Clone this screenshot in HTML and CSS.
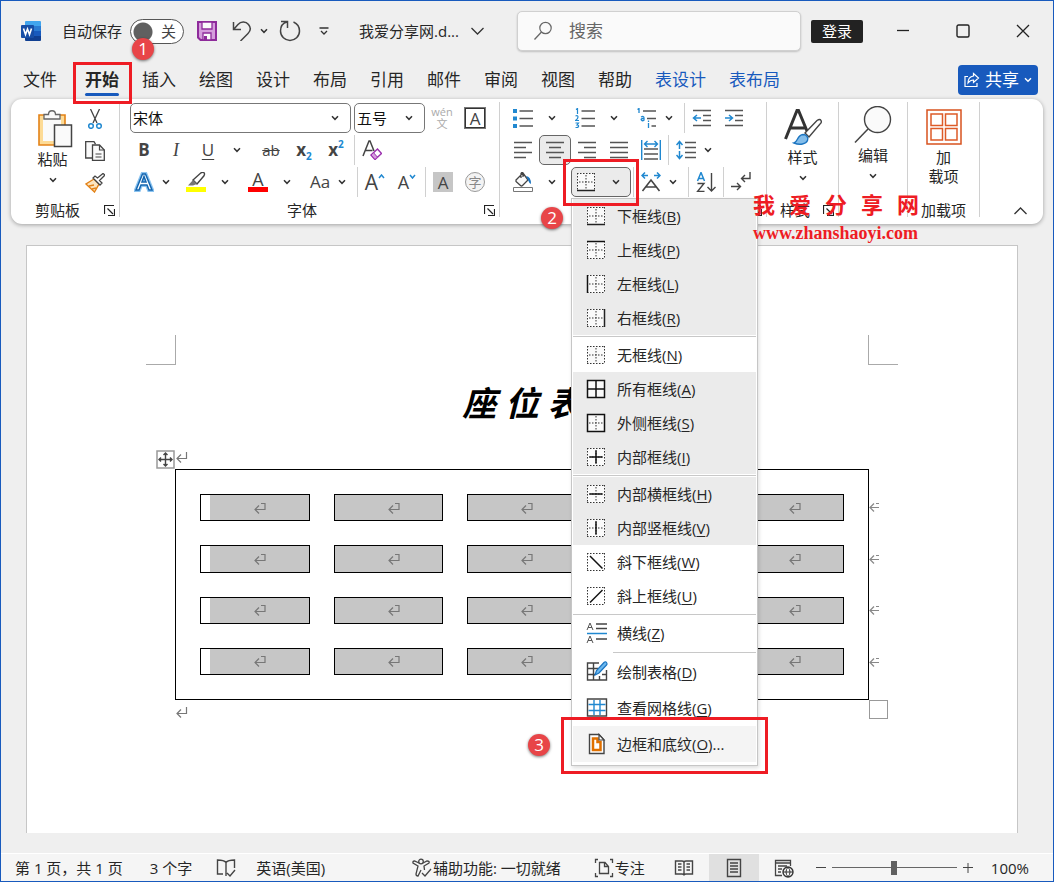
FILE: index.html
```html
<!DOCTYPE html>
<html lang="zh-CN">
<head>
<meta charset="utf-8">
<title>我爱分享网 - Word</title>
<link rel="stylesheet" href="styles.css">
</head>
<body>
<svg class="defs" aria-hidden="true">
  <symbol id="chev" viewBox="0 0 8 6"><path d="M1 1.200 4 4.300 7 1.200" fill="none" stroke="#333" stroke-width="1.500"/></symbol>
  <symbol id="launch" viewBox="0 0 11 11"><path d="M.5 9V.5H10M3.500 3.500l5.500 5.500M10.500 4v6.500H4" fill="none" stroke="#222" stroke-width="1.200"/></symbol>
  <symbol id="dots" viewBox="0 0 20 20"><path fill="#fafafa" d="M1 1h18v18H1z"/><path d="M1 1.500h18M1 18.500h18M1.500 1v18M18.500 1v18M10 3v14M3 10h14" fill="none" stroke="#333" stroke-dasharray="1.500 1.500"/></symbol>
  <symbol id="mark" viewBox="0 0 12 12"><path d="M10.500 1v6.500H1.500M5 3.500l-4 4 4 4" fill="none" stroke="#777" stroke-width="1.200"/></symbol>
  <symbol id="cellmark" viewBox="0 0 12 12"><path d="M7 1.500h4v6H1.500M5 3.500l-4 4 4 4" fill="none" stroke="#777" stroke-width="1.200"/></symbol>
  <symbol id="rowmark" viewBox="0 0 12 12"><path d="M7 2.500h3M1 6.500h9M5 2.500l-4 4 4 4" fill="none" stroke="#888" stroke-width="1.200"/></symbol>
</svg>

<header class="titlebar">
  <svg class="i20 logo" viewBox="0 0 20 20"><path fill="#41a5ee" d="M5 0h14q1 0 1 1v4H4V1q0-1 1-1z"/><path fill="#2b7cd3" d="M4 5h16v5H4z"/><path fill="#185abd" d="M4 10h16v5H4z"/><path fill="#103f91" d="M4 15h16v4q0 1-1 1H5q-1 0-1-1z"/><rect y="4" width="13" height="13" rx="1" fill="#174ea6"/><path d="m2.500 7.500 2 6 2-5.500 2 5.500 2-6" fill="none" stroke="#fff" stroke-width="1.600"/></svg>
  <label class="autosave" for="autosave">自动保存</label>
  <span class="switch"><input type="checkbox" id="autosave" role="switch"><span>关</span><span class="badge badge-1">1</span></span>
  <button class="plain save" aria-label="保存"><svg class="i20" viewBox="0 0 20 20"><path fill="#d59ddc" stroke="#8e2b9b" stroke-width="2" d="M1 1h18v18H3.500L1 16.500z"/><path fill="#fafafa" stroke="#8e2b9b" stroke-width="1.300" d="M5 1h10v7H5zM6 12h8v7H6z"/><path fill="#8e2b9b" d="M7 15h3v4H7z"/></svg></button>
  <button class="plain undo" aria-label="撤消"><svg class="i20" viewBox="0 0 20 20"><path d="M1.500 1v7.500H9M2 8l4-4.500C9 0 14 .500 16.500 3.500c2.500 3 2 6.500-.500 9L8.500 20" fill="none" stroke="#444" stroke-width="1.500"/></svg></button>
  <button class="plain" aria-label="撤消选项"><svg class="chev"><use href="#chev"/></svg></button>
  <button class="plain redo" aria-label="重复"><svg class="i22" viewBox="0 0 22 22"><path d="M2 1.500h6.500V8M8 2C4 3 1.500 6.500 1.500 11c0 5.500 4.500 9.500 9.500 9.500s9.500-4 9.500-9.500c0-4.500-2.500-7.500-6-9" fill="none" stroke="#444" stroke-width="1.500"/></svg></button>
  <button class="plain qat" aria-label="自定义快速访问工具栏"><svg width="10" height="9" viewBox="0 0 10 9"><path d="M.5 1h9M2 4l3 3 3-3" fill="none" stroke="#333" stroke-width="1.300"/></svg></button>
  <button class="plain filename">我爱分享网.d...<svg width="13" height="8" viewBox="0 0 13 8"><path d="m.5 1 6 6 6-6" fill="none" stroke="#333" stroke-width="1.300"/></svg></button>
  <div class="search"><svg class="i20" viewBox="0 0 20 20"><circle cx="12.500" cy="7" r="5.700" fill="none" stroke="#666" stroke-width="1.200"/><path d="m8.500 11-7 7.500" stroke="#666" stroke-width="1.300"/></svg><input type="text" placeholder="搜索" aria-label="搜索"></div>
  <button class="login">登录</button>
  <div class="window-buttons">
    <button class="plain" aria-label="最小化"><svg class="i14" viewBox="0 0 14 14"><path d="M1 6.500h12" stroke="#222" stroke-width="1.300"/></svg></button>
    <button class="plain" aria-label="最大化"><svg class="i14" viewBox="0 0 14 14"><rect x="1" y="1" width="12" height="12" rx="1.500" fill="none" stroke="#222" stroke-width="1.400"/></svg></button>
    <button class="plain" aria-label="关闭"><svg class="i14" viewBox="0 0 14 14"><path d="m1 1 12 12M13 1 1 13" stroke="#222" stroke-width="1.300"/></svg></button>
  </div>
</header>

<nav class="tabs">
  <button class="tab">文件</button>
  <button class="tab active">开始<span class="frame frame-tab"></span></button>
  <button class="tab">插入</button>
  <button class="tab">绘图</button>
  <button class="tab">设计</button>
  <button class="tab">布局</button>
  <button class="tab">引用</button>
  <button class="tab">邮件</button>
  <button class="tab">审阅</button>
  <button class="tab">视图</button>
  <button class="tab">帮助</button>
  <button class="tab context">表设计</button>
  <button class="tab context">表布局</button>
  <button class="share"><svg class="i16" viewBox="0 0 16 16"><path d="M4 4.500H1v10h12V11M9.500 1.500l5 4.500-5 4.500V8C7 8 5.500 9 4 11c0-4 2-6.500 5.500-7z" fill="none" stroke="#fff" stroke-width="1.200"/></svg>共享<svg class="chev" viewBox="0 0 8 6"><path d="M1 1.200 4 4.300 7 1.200" fill="none" stroke="#fff" stroke-width="1.400"/></svg></button>
</nav>

<main class="ribbon">
  <section class="group clipboard">
    <div class="group-body columns">
      <button class="big paste"><svg width="36" height="40" viewBox="0 0 36 40"><path fill="#fddb96" stroke="#e38217" stroke-width="1.600" d="M2 7h26v30H2z"/><path fill="#fafafa" d="M6 11h18v22H6z"/><path fill="#fafafa" stroke="#666" stroke-width="1.300" d="M7 11V6.500h4.500c0-5 7-5 7 0H23V11z"/><path fill="#fafafa" stroke="#444" stroke-width="1.500" d="M17.500 17h17v21.500h-17z"/></svg><span>粘贴</span><svg class="chev"><use href="#chev"/></svg></button>
      <div class="stack">
        <button class="tool" aria-label="剪切"><svg class="i20" viewBox="0 0 20 20"><path d="M5.500 0 12 14M14.500 0 8 14" stroke="#444" stroke-width="1.300"/><circle cx="6" cy="17" r="2.300" fill="none" stroke="#2088d0" stroke-width="1.500"/><circle cx="14" cy="17" r="2.300" fill="none" stroke="#2088d0" stroke-width="1.500"/></svg></button>
        <button class="tool" aria-label="复制"><svg class="i20" viewBox="0 0 20 20"><path d="M7 17H.7V.7H9l1.500 2.500" fill="#fafafa" stroke="#444" stroke-width="1.300"/><path d="M7.500 4h7l4.800 5v10.300H7.500z" fill="#fafafa" stroke="#444" stroke-width="1.300"/><path d="M14.500 4v5h5M10.500 13h6M10.500 16h6" fill="none" stroke="#444" stroke-width="1.200"/></svg></button>
        <button class="tool" aria-label="格式刷"><svg class="i20" viewBox="0 0 20 20"><path d="m9 6-8 5 8.500 8L14 11z" fill="#fce5c0" stroke="#e38217" stroke-width="1.400"/><path d="m4 13 5-1M7 16l4-1" stroke="#e38217" stroke-width="1.300"/><path d="m8 5 7 7 2-2-2.500-2.500L20 2l-2-1.500L12.500 5 10 3z" fill="#fff" stroke="#444" stroke-width="1.300"/></svg></button>
      </div>
    </div>
    <footer><span>剪贴板</span><button class="plain" aria-label="剪贴板选项"><svg class="launch"><use href="#launch"/></svg></button></footer>
  </section>

  <section class="group font">
    <div class="group-body">
      <div class="row fields">
        <span class="combo family"><select aria-label="字体"><option>宋体</option></select><svg class="chev"><use href="#chev"/></svg></span>
        <span class="combo size"><select aria-label="字号"><option>五号</option></select><svg class="chev"><use href="#chev"/></svg></span>
        <button class="tool phonetic" aria-label="拼音指南"><span>wén</span><span>文</span></button>
        <button class="tool"><span class="boxed">A</span></button>
      </div>
      <div class="row">
        <button class="tool bold">B</button>
        <button class="tool italic">I</button>
        <button class="tool underline">U</button>
        <button class="drop wide" aria-label="下划线选项"><svg class="chev"><use href="#chev"/></svg></button>
        <button class="tool strike">ab</button>
        <button class="tool script"><b>x</b><sub>2</sub></button>
        <button class="tool script"><b>x</b><sup>2</sup></button>
        <span class="sep"></span>
        <button class="tool" aria-label="清除格式"><svg class="i20" viewBox="0 0 20 20"><path d="M1 16 7 1h1l4 10M3.500 10.500h7" fill="none" stroke="#444" stroke-width="1.500"/><path d="m9 15 6.500-6 4 4.500-6.500 6z" fill="#fff" stroke="#9b2fae" stroke-width="1.400"/><path d="m9 15 2.500-2.300 4 4.500-2.500 2.300z" fill="#d59ddc" stroke="#9b2fae"/></svg></button>
      </div>
      <div class="row">
        <button class="tool" aria-label="文本效果"><svg class="i20" viewBox="0 0 20 20"><path d="M2 18 8.500 2h3L18 18h-3l-2-5H7l-2 5zM8 10h4l-2-5.500z" fill="#fff" stroke="#8cc4f0" stroke-width="4"/><path d="M2 18 8.500 2h3L18 18h-3l-2-5H7l-2 5zM8 10h4l-2-5.500z" fill="#fff" stroke="#1466b0" stroke-width="1.500"/></svg></button>
        <button class="drop" aria-label="文本效果选项"><svg class="chev"><use href="#chev"/></svg></button>
        <button class="tool" aria-label="突出显示"><svg class="i20" viewBox="0 0 20 20"><path d="M7 8 15 .8q2-1 3 0t0 3L11 12z" fill="#fff" stroke="#444" stroke-width="1.400"/><path d="m7 8 4 4-4 1.500H2z" fill="#777"/><path fill="#ff0" d="M0 15h20v5H0z"/></svg></button>
        <button class="drop wide" aria-label="突出显示颜色"><svg class="chev"><use href="#chev"/></svg></button>
        <button class="tool color" aria-label="字体颜色"><span>A</span></button>
        <button class="drop wide" aria-label="字体颜色选项"><svg class="chev"><use href="#chev"/></svg></button>
        <button class="tool case">Aa</button>
        <button class="drop" aria-label="更改大小写"><svg class="chev"><use href="#chev"/></svg></button>
        <span class="sep"></span>
        <button class="tool grow">A<svg class="caret" viewBox="0 0 7 5"><path d="m1 4 2.500-3L6 4" fill="none" stroke="#2088d0" stroke-width="1.500"/></svg></button>
        <button class="tool shrink">A<svg class="caret" viewBox="0 0 7 5"><path d="m1 1 2.500 3L6 1" fill="none" stroke="#2088d0" stroke-width="1.500"/></svg></button>
        <span class="sep"></span>
        <button class="tool"><span class="shaded">A</span></button>
        <button class="tool"><span class="circled">字</span></button>
      </div>
    </div>
    <footer><span>字体</span><button class="plain" aria-label="字体选项"><svg class="launch"><use href="#launch"/></svg></button></footer>
  </section>

  <section class="group paragraph">
    <div class="group-body">
      <div class="row">
        <button class="tool" aria-label="项目符号"><svg class="i20" viewBox="0 0 20 20"><path fill="#2088d0" d="M0 1h4v4H0zM0 8.500h4v4H0zM0 16h4v4H0z"/><path d="M6.500 3H20M6.500 10.500H20M6.500 18H20" stroke="#555" stroke-width="1.300"/></svg></button>
        <button class="drop wide" aria-label="项目符号库"><svg class="chev"><use href="#chev"/></svg></button>
        <button class="tool" aria-label="编号"><svg class="i20" viewBox="0 0 20 20"><path d="M1 1.500 2.500.500V6M.500 8q2.500-1 2.500 1t-2.500 3.500H4M.500 15H3.500L2 17q2 0 1.500 1.500T.500 19.500" fill="none" stroke="#2088d0" stroke-width="1.200"/><path d="M6.500 3H20M6.500 10.500H20M6.500 18H20" stroke="#555" stroke-width="1.300"/></svg></button>
        <button class="drop wide" aria-label="编号库"><svg class="chev"><use href="#chev"/></svg></button>
        <button class="tool" aria-label="多级列表"><svg class="i20" viewBox="0 0 20 20"><path d="M.500 1.500 2 .500V5M4 9q3-1.500 3 1v2.500M7 10.500H5.500q-2 .500-1 1.700t2.500 0M11.500 15v5M11.500 12.500V14" fill="none" stroke="#2088d0" stroke-width="1.300"/><path d="M6 3h13M10 10.500h9M14.500 18H19" stroke="#555" stroke-width="1.300"/></svg></button>
        <button class="drop" aria-label="列表库"><svg class="chev"><use href="#chev"/></svg></button>
        <span class="sep"></span>
        <button class="tool" aria-label="减少缩进量"><svg class="i20" viewBox="0 0 20 20"><path d="M1 2.500h18M11 7.500h8M11 12.500h8M1 17.500h18" stroke="#555" stroke-width="1.300"/><path d="M9 10H2m3-3-3.500 3L5 13" fill="none" stroke="#2088d0" stroke-width="1.500"/></svg></button>
        <button class="tool" aria-label="增加缩进量"><svg class="i20" viewBox="0 0 20 20"><path d="M1 2.500h18M11 7.500h8M11 12.500h8M1 17.500h18" stroke="#555" stroke-width="1.300"/><path d="M1 10h7M5 7l3.500 3L5 13" fill="none" stroke="#2088d0" stroke-width="1.500"/></svg></button>
      </div>
      <div class="row">
        <button class="tool" aria-label="左对齐"><svg class="i20" viewBox="0 0 20 20"><path d="M1 2.500h18M1 7.500h12M1 12.500h18M1 17.500h12" stroke="#555" stroke-width="1.400"/></svg></button>
        <button class="tool pressed" aria-label="居中"><svg class="i20" viewBox="0 0 20 20"><path d="M1 2.500h18M4 7.500h12M1 12.500h18M4 17.500h12" stroke="#555" stroke-width="1.400"/></svg></button>
        <button class="tool" aria-label="右对齐"><svg class="i20" viewBox="0 0 20 20"><path d="M1 2.500h18M7 7.500h12M1 12.500h18M7 17.500h12" stroke="#555" stroke-width="1.400"/></svg></button>
        <button class="tool" aria-label="两端对齐"><svg class="i20" viewBox="0 0 20 20"><path d="M1 2.500h18M1 7.500h18M1 12.500h18M1 17.500h18" stroke="#555" stroke-width="1.400"/></svg></button>
        <button class="tool" aria-label="分散对齐"><svg class="i20" viewBox="0 0 20 20"><path d="M3 9h14M3 14h14M3 19h14" stroke="#555" stroke-width="1.400"/><path d="M.7 0v20M19.300 0v20M4 4h12M6.500 1 3.500 4l3 3M13.500 1l3 3-3 3" fill="none" stroke="#2088d0" stroke-width="1.400"/></svg></button>
        <span class="sep"></span>
        <button class="tool" aria-label="行距"><svg class="i20" viewBox="0 0 20 20"><path d="M9 2.500h11M9 7.500h11M9 12.500h11M9 17.500h11" stroke="#555" stroke-width="1.400"/><path d="M3.500 9V2M.500 5l3-3.500 3 3.500M3.500 11v7M.500 15l3 3.500 3-3.500" fill="none" stroke="#2088d0" stroke-width="1.500"/></svg></button>
        <button class="drop" aria-label="行距选项"><svg class="chev"><use href="#chev"/></svg></button>
      </div>
      <div class="row">
        <button class="tool" aria-label="底纹"><svg class="i20" viewBox="0 0 20 20"><path d="m3 8 7-7 5 7-5.500 5.500q-1 1-2 0L3 9.500zM8 6V1.500q1-2 2 0V5" fill="#fafafa" stroke="#444" stroke-width="1.300"/><path d="M13 4q5 .500 5 8-2-1-3-4z" fill="#1b74c0"/><path d="M.500 15.500h19v4H.500z" fill="#fff" stroke="#777"/></svg></button>
        <button class="drop wide" aria-label="底纹颜色"><svg class="chev"><use href="#chev"/></svg></button>
        <div class="borders">
          <button class="borders-button" aria-label="边框" aria-expanded="true"><svg class="i20" viewBox="0 0 20 20"><use href="#dots"/><path d="M1 18.500h18" stroke="#222" stroke-width="1.500"/></svg><svg class="chev"><use href="#chev"/></svg></button>
          <div class="menu" role="menu">
            <button class="item on" role="menuitem"><svg class="i20" viewBox="0 0 20 20"><use href="#dots"/><path d="M1 18.500h18" stroke="#222" stroke-width="1.500"/></svg><span>下框线(<u>B</u>)</span></button>
            <button class="item on" role="menuitem"><svg class="i20" viewBox="0 0 20 20"><use href="#dots"/><path d="M1 1.500h18" stroke="#111" stroke-width="1.500"/></svg><span>上框线(<u>P</u>)</span></button>
            <button class="item on" role="menuitem"><svg class="i20" viewBox="0 0 20 20"><use href="#dots"/><path d="M1.500 1v18" stroke="#111" stroke-width="1.500"/></svg><span>左框线(<u>L</u>)</span></button>
            <button class="item on" role="menuitem"><svg class="i20" viewBox="0 0 20 20"><use href="#dots"/><path d="M18.500 1v18" stroke="#222" stroke-width="1.500"/></svg><span>右框线(<u>R</u>)</span></button>
            <hr>
            <button class="item" role="menuitem"><svg class="i20" viewBox="0 0 20 20"><use href="#dots"/></svg><span>无框线(<u>N</u>)</span></button>
            <button class="item on" role="menuitem"><svg class="i20" viewBox="0 0 20 20"><path d="M1.500 1.500h17v17h-17zM10 1.500v17M1.500 10h17" fill="#fafafa" stroke="#111" stroke-width="1.500"/></svg><span>所有框线(<u>A</u>)</span></button>
            <button class="item on" role="menuitem"><svg class="i20" viewBox="0 0 20 20"><use href="#dots"/><path d="M1.500 1.500h17v17h-17z" fill="none" stroke="#111" stroke-width="1.500"/></svg><span>外侧框线(<u>S</u>)</span></button>
            <button class="item on" role="menuitem"><svg class="i20" viewBox="0 0 20 20"><use href="#dots"/><path d="M10 3.500v13M3.500 10h13" stroke="#111" stroke-width="1.500"/></svg><span>内部框线(<u>I</u>)</span></button>
            <hr>
            <button class="item on" role="menuitem"><svg class="i20" viewBox="0 0 20 20"><use href="#dots"/><path d="M3.500 10h13" stroke="#111" stroke-width="1.500"/></svg><span>内部横框线(<u>H</u>)</span></button>
            <button class="item on" role="menuitem"><svg class="i20" viewBox="0 0 20 20"><use href="#dots"/><path d="M10 3.500v13" stroke="#111" stroke-width="1.500"/></svg><span>内部竖框线(<u>V</u>)</span></button>
            <button class="item" role="menuitem"><svg class="i20" viewBox="0 0 20 20"><path d="M1 1.500h18M1 18.500h18M1.500 1v18M18.500 1v18" fill="none" stroke="#333" stroke-dasharray="1.500 1.500"/><path d="m4 4 12.500 12.500" stroke="#111" stroke-width="1.500"/></svg><span>斜下框线(<u>W</u>)</span></button>
            <button class="item" role="menuitem"><svg class="i20" viewBox="0 0 20 20"><path d="M1 1.500h18M1 18.500h18M1.500 1v18M18.500 1v18" fill="none" stroke="#333" stroke-dasharray="1.500 1.500"/><path d="M4 16.500 16.500 4" stroke="#111" stroke-width="1.500"/></svg><span>斜上框线(<u>U</u>)</span></button>
            <hr>
            <button class="item" role="menuitem"><svg class="i22" viewBox="0 0 22 22"><path d="m1 8 3-7 3 7M2 5.500h4M1 21l3-7 3 7M2 18.500h4" fill="none" stroke="#555"/><path d="M10 2h11M10 6.500h11M10 17h11" stroke="#444" stroke-width="1.400"/><path d="M1 11.500h20" stroke="#2088d0" stroke-width="1.500"/></svg><span>横线(<u>Z</u>)</span></button>
            <hr class="inset">
            <button class="item tall" role="menuitem"><svg class="i22" viewBox="0 0 22 22"><path d="M13 2H1.500v17h19V9M1.500 7.500H12M1.500 13.500H9M7.500 2v17M13.500 15v4M16 13.500h4" fill="none" stroke="#444" stroke-width="1.400"/><path d="M9 14 10.500 9.500 18 1.500q1.500-1.500 2.500 0t0 2.500L13 12z" fill="#6cb8ef" stroke="#1b74c0" stroke-width="1.200"/></svg><span>绘制表格(<u>D</u>)</span></button>
            <button class="item tall" role="menuitem"><svg class="i22" viewBox="0 0 22 22"><path d="M1.500 2h19v17h-19z" fill="#fff" stroke="#444" stroke-width="1.400"/><path d="M8 3v15M14 3v15M2.500 7.500h17M2.500 13.500h17" stroke="#2088d0" stroke-width="1.400"/></svg><span>查看网格线(<u>G</u>)</span></button>
            <button class="item tall hover" role="menuitem"><svg class="i22" viewBox="0 0 22 22"><path d="M3.500 1.500h9.500l5 5.500v13.500H3.500z" fill="#fff" stroke="#444" stroke-width="1.400"/><path d="M7 5.500h4.500v3.500H14.500v8H7z" fill="#fff" stroke="#e07000" stroke-width="2.500"/><path d="M13 1.500V7h5z" fill="#fff" stroke="#444" stroke-width="1.200"/></svg><span>边框和底纹(<u>O</u>)...</span><span class="frame frame-item"></span><span class="badge badge-3">3</span></button>
          </div>
          <span class="frame frame-borders"></span>
          <span class="badge badge-2">2</span>
        </div>
        <span class="sep"></span>
        <button class="tool" aria-label="中文版式"><svg class="i20" viewBox="0 0 20 20"><path d="M1.500 19 10 8l8.500 11M5 15h10" fill="none" stroke="#444" stroke-width="1.600"/><path d="M7 3.500H1M4 .500l-3 3 3 3M13 3.500h6M16 .500l3 3-3 3" fill="none" stroke="#2088d0" stroke-width="1.500"/></svg></button>
        <button class="drop" aria-label="中文版式选项"><svg class="chev"><use href="#chev"/></svg></button>
        <span class="sep"></span>
        <button class="tool" aria-label="排序"><svg class="i20" viewBox="0 0 20 20"><path d="m1.500 9 3.500-8.500L8.500 9M2.500 6.500h5" fill="none" stroke="#2088d0" stroke-width="1.500"/><path d="M1.500 11.500H8L1.500 19.500h7M15.500 1v18M11.500 15l4 4 4-4" fill="none" stroke="#444" stroke-width="1.400"/></svg></button>
        <span class="sep"></span>
        <button class="tool" aria-label="显示编辑标记"><svg class="i20" viewBox="0 0 20 20"><path d="M19 0v6.500H11M14 3l-3.500 3.500L14 10M0 14.500h9.500M6 11l3.500 3.500L6 18" fill="none" stroke="#444" stroke-width="1.400"/></svg></button>
      </div>
    </div>
    <footer><span></span><button class="plain" aria-label="段落选项"><svg class="launch"><use href="#launch"/></svg></button></footer>
  </section>

  <section class="group styles">
    <div class="group-body columns">
      <button class="big"><svg width="38" height="38" viewBox="0 0 38 38"><path d="M1.500 31 13 2.500h1.500L23 23M6 20h15" fill="none" stroke="#333" stroke-width="3"/><path d="M21 25 33 12.500q3-2 4 0t-1 3.500L25 29z" fill="#fff" stroke="#444" stroke-width="1.400"/><path d="M10 35c4-1 3-8 9-8.500 3 0 6 2.500 4.500 6S16 37.500 10 35z" fill="#83bdea" stroke="#1b74c0" stroke-width="1.400"/></svg><span>样式</span><svg class="chev"><use href="#chev"/></svg></button>
    </div>
    <footer><span>样式</span><button class="plain" aria-label="样式选项"><svg class="launch"><use href="#launch"/></svg></button></footer>
  </section>

  <section class="group editing">
    <div class="group-body columns">
      <button class="big"><svg width="38" height="38" viewBox="0 0 38 38"><circle cx="23.500" cy="13.500" r="13" fill="#fafafa" stroke="#444" stroke-width="1.400"/><path d="M14 23 1 36.500" stroke="#444" stroke-width="1.500"/></svg><span>编辑</span><svg class="chev"><use href="#chev"/></svg></button>
    </div>
  </section>

  <section class="group addins">
    <div class="group-body columns">
      <button class="big"><svg width="38" height="38" viewBox="0 0 38 38"><path d="M2 2h34v34H2z" fill="#fff" stroke="#d8531f" stroke-width="1.500"/><path d="M6 6h11.500v11.500H6zM20.500 6H32v11.500H20.500zM6 20.500h11.500V32H6zM20.500 20.500H32V32H20.500z" fill="#fff" stroke="#dd5b28" stroke-width="1.500"/></svg><span>加<br>载项</span></button>
    </div>
    <footer><span>加载项</span></footer>
  </section>
  <button class="plain collapse" aria-label="折叠功能区"><svg width="13" height="8" viewBox="0 0 13 8"><path d="m.5 7 6-6 6 6" fill="none" stroke="#333" stroke-width="1.300"/></svg></button>

  <div class="watermark"><p class="brand"><span>我</span><span>爱</span><span>分</span><span>享</span><span>网</span></p><p class="site">www.zhanshaoyi.com</p></div>
</main>

<section class="workspace">
  <article class="page">
    <div class="crops"><span class="crop left"></span><span class="crop right"></span></div>
    <h1>座 位 表</h1>
    <div class="line before"><svg class="i12"><use href="#mark"/></svg></div>
    <div class="table-wrap">
      <svg class="handle" viewBox="0 0 19 19"><path fill="#fff" stroke="#999" stroke-width="1.500" d="M1 1h17v17H1z"/><path d="M9.500 3v13M3 9.500h13M7.500 5l2-2 2 2M7.500 14l2 2 2-2M5 7.500l-2 2 2 2M14 7.500l2 2-2 2" fill="none" stroke="#444" stroke-width="1.400"/></svg>
      <table class="seats" aria-label="座位表">
        <tr><td><svg class="i12"><use href="#cellmark"/></svg></td><td><svg class="i12"><use href="#cellmark"/></svg></td><td><svg class="i12"><use href="#cellmark"/></svg></td><td></td><td><svg class="i12"><use href="#cellmark"/></svg></td></tr>
        <tr><td><svg class="i12"><use href="#cellmark"/></svg></td><td><svg class="i12"><use href="#cellmark"/></svg></td><td><svg class="i12"><use href="#cellmark"/></svg></td><td></td><td><svg class="i12"><use href="#cellmark"/></svg></td></tr>
        <tr><td><svg class="i12"><use href="#cellmark"/></svg></td><td><svg class="i12"><use href="#cellmark"/></svg></td><td><svg class="i12"><use href="#cellmark"/></svg></td><td></td><td><svg class="i12"><use href="#cellmark"/></svg></td></tr>
        <tr><td><svg class="i12"><use href="#cellmark"/></svg></td><td><svg class="i12"><use href="#cellmark"/></svg></td><td><svg class="i12"><use href="#cellmark"/></svg></td><td></td><td><svg class="i12"><use href="#cellmark"/></svg></td></tr>
      </table>
      <div class="row-marks"><svg class="i12"><use href="#rowmark"/></svg><svg class="i12"><use href="#rowmark"/></svg><svg class="i12"><use href="#rowmark"/></svg><svg class="i12"><use href="#rowmark"/></svg></div>
      <span class="resize"></span>
    </div>
    <div class="line"><svg class="i12"><use href="#mark"/></svg></div>
  </article>
</section>

<footer class="status">
  <span>第 1 页，共 1 页</span>
  <span class="words">3 个字</span>
  <button class="plain proof" aria-label="校对"><svg class="i20" viewBox="0 0 20 20"><path d="M10 18V4.500Q8 2 1.500 2v14H7M10 4.500Q12 2 18.500 2v8M11 15l3 3 5-6" fill="none" stroke="#444" stroke-width="1.400"/></svg></button>
  <span class="language">英语(美国)</span>
  <button class="plain access"><svg class="i20" viewBox="0 0 20 20"><circle cx="9" cy="3.500" r="2.300" fill="none" stroke="#444" stroke-width="1.300"/><path d="M7 5 2.500 3Q.500 3 1 5l5 3-2 8q0 2 2 2l3-6M11 5l4-2q3 0 2 2l-5 3 .500 4M10 15l3 3 6-7" fill="none" stroke="#444" stroke-width="1.300"/></svg>辅助功能: 一切就绪</button>
  <button class="plain focus"><svg class="i20" viewBox="0 0 20 20"><path d="M4 1.500H1.500V5M16 1.500h2.500V5M4 18.500H1.500V15M16 18.500h2.500V15M5.500 4.500H11l3.500 4v7h-9zM10.500 4.500v4h4" fill="none" stroke="#444" stroke-width="1.300"/></svg>专注</button>
  <div class="views">
    <button class="view" aria-label="阅读视图"><svg class="i20" viewBox="0 0 20 20"><path d="M1.500 3H8q2 0 2 1.500Q10 3 12 3h6.500v13H12q-2 0-2 1.500Q10 16 8 16H1.500zM10 4.500v13M4 6h3.500M4 9h3.500M4 12h3.500M12.500 6H16M12.500 9H16M12.500 12H16" fill="none" stroke="#444" stroke-width="1.400"/></svg></button>
    <button class="view current" aria-label="页面视图"><svg class="i20" viewBox="0 0 20 20"><path d="M3.500 1.500h13v17h-13zM6 5h8M6 8h8M6 11h8M6 14h8" fill="none" stroke="#444" stroke-width="1.400"/></svg></button>
    <button class="view" aria-label="Web 版式视图"><svg class="i20" viewBox="0 0 20 20"><path d="M8 17.500H1.500v-15h15V8M1.500 5h15M4 8h9M4 11h4M4 14h3" fill="none" stroke="#444" stroke-width="1.300"/><circle cx="14" cy="14" r="5" fill="#f5f5f5" stroke="#333" stroke-width="1.400"/><path d="M9 14h10M14 9q-4 5 0 10M14 9q4 5 0 10" fill="none" stroke="#333"/></svg></button>
  </div>
  <div class="zoom"><button class="plain" aria-label="缩小"><svg class="i12" viewBox="0 0 12 12"><path d="M1 5.500h10" stroke="#444"/></svg></button><input type="range" min="0" max="100" value="50" aria-label="缩放"><button class="plain" aria-label="放大"><svg class="i12" viewBox="0 0 12 12"><path d="M1 5.500h10M6 1v10" stroke="#444"/></svg></button></div>
  <span class="percent">100%</span>
</footer>
</body>
</html>
```
FILE: styles.css
```css
* { box-sizing: border-box; }
body {
  margin: 0;
  min-height: 100vh;
  display: flex;
  flex-direction: column;
  border: 1px solid #185abd;
  background: #efefef;
  color: #262626;
  font: 15px/20px "Open Sans", "Noto Sans CJK SC", sans-serif;
}
button, input, select { font: inherit; color: inherit; margin: 0; }
button { padding: 0; border: 0; background: none; white-space: nowrap; }
p { margin: 0; }
svg { display: block; flex: none; }
.defs { position: absolute; width: 0; height: 0; }
.i12 { width: 12px; height: 12px; }
.i14 { width: 14px; height: 14px; }
.i16 { width: 16px; height: 16px; }
.i20 { width: 20px; height: 20px; }
.i22 { width: 22px; height: 22px; }
.chev { width: 8px; height: 6px; }
.launch { width: 11px; height: 11px; }

/* Title bar */
.titlebar { display: flex; align-items: center; height: 60px; padding-left: 20px; }
.autosave { margin: 0 8px 0 21px; white-space: nowrap; }
.switch { position: relative; display: flex; flex: none; width: 54px; height: 25px; }
.switch input {
  appearance: none;
  width: 100%;
  height: 100%;
  border: 1px solid #555;
  border-radius: 13px;
  background: radial-gradient(circle at 12px 12px, #606060 9px, #fff 10px);
}
.switch > span:not(.badge) { position: absolute; right: 8px; top: 2px; color: #444; }
.save { margin-left: 13px; }
.undo { margin: 0 8px 0 15px; }
.redo { margin-left: 11px; }
.qat { margin-left: 18px; }
.filename { display: flex; align-items: center; gap: 12px; margin-left: 30px; }
.search {
  display: flex;
  align-items: center;
  gap: 16px;
  flex: 1;
  min-width: 0;
  height: 40px;
  margin: 0 10px 0 33px;
  padding-left: 15px;
  border: 1px solid #d0d0d0;
  border-radius: 5px;
  background: #fafafa;
  box-shadow: 0 1px 2px #0003;
}
.search input { flex: 1; min-width: 0; border: 0; padding: 0; background: none; font-size: 17px; }
.search input::placeholder { color: #666; opacity: 1; }
.login { flex: none; width: 52px; height: 23px; border-radius: 2px; background: #222; color: #fff; }
.window-buttons { display: flex; padding-left: 10px; }
.window-buttons button { display: grid; place-items: center; width: 60px; height: 40px; }

/* Tabs */
.tabs { display: flex; align-items: center; gap: 23px; height: 38px; padding: 0 15px 0 22px; font-size: 17px; }
.tab { position: relative; flex: none; height: 34px; }
.tab.active { margin-left: 5px; font-weight: 700; }
.tab.active::after { content: ""; position: absolute; left: 0; right: 0; bottom: 1px; height: 3px; border-radius: 2px; background: #185abd; }
.tab.context { color: #185abd; }
.share { display: flex; align-items: center; justify-content: center; gap: 5px; width: 80px; height: 30px; margin-left: auto; border-radius: 4px; background: #185abd; color: #fff; }

/* Ribbon */
.ribbon { position: relative; display: flex; flex: none; margin: 0 10px; padding-bottom: 7px; border-radius: 11px; background: #fff; box-shadow: 0 1px 4px #0005; }
.group { display: flex; flex: none; flex-direction: column; margin-top: 3px; border-right: 1px solid #d0d0d0; }
.group-body { height: 101px; padding: 0 8px; }
.group > footer { display: flex; align-items: center; height: 14px; padding-right: 4px; }
.group > footer span { flex: 1; text-align: center; }
.columns { display: flex; }
.clipboard { width: 109px; }
.clipboard .group-body { padding-left: 21px; gap: 6px; }
.big { display: flex; flex-direction: column; align-items: center; gap: 2px; padding-top: 6px; align-self: flex-start; }
.big span { line-height: 19px; }
.big .chev { margin-top: 6px; }
.clipboard .big svg:first-child { margin-left: 5px; }
.stack { padding-top: 1px; }
.stack .tool { height: 32px; }
.styles .columns, .editing .columns, .addins .columns { justify-content: center; padding: 0; }
.styles { width: 72px; }
.editing { width: 69px; }
.addins { width: 72px; }
.addins > footer { padding: 0; }
.editing .big { padding-top: 4px; }
.row { display: flex; align-items: center; height: 32px; }
.tool { display: flex; align-items: center; justify-content: center; flex: none; width: 32px; height: 30px; color: #444; }
.drop { display: grid; place-items: center; width: 12px; height: 30px; margin-right: 8px; }
.drop.wide { width: 26px; margin-right: 4px; }
.sep { width: 1px; height: 30px; margin: 0 1px 0 2px; background: #d0d0d0; }
.drop + .sep { margin-left: 1px; }
.combo { position: relative; display: flex; height: 30px; margin: 0 3px 0 2px; }
.combo + .combo { margin: 0; }
.combo select { appearance: none; width: 100%; padding: 0 2px; border: 1px solid #777; border-radius: 5px; background: #fff; color: #111; }
.combo .chev { position: absolute; right: 12px; top: 12px; }
.family { width: 221px; }
.size { width: 71px; }
.phonetic { flex-direction: column; color: #aaa; font-size: 11px; line-height: 12px; }
.phonetic span { height: 12px; }
.fields .phonetic { width: 34px; }
.boxed, .shaded, .circled { display: grid; place-items: center; width: 20px; height: 20px; font-size: 17px; line-height: 17px; }
.boxed { border: 1px solid #333; outline: 1px solid #777; }
.shaded { background: #c6c6c6; }
.circled { border: 1px solid #999; border-radius: 50%; background: #f3f3f3; color: #888; font-size: 13px; }
.bold { font-weight: 700; font-size: 17px; }
.italic { font: italic 18px "Liberation Serif", serif; }
.underline { font-size: 17px; text-decoration: underline; text-underline-offset: 3px; }
.strike { width: 34px; text-decoration: line-through; }
.script { height: 22px; font-size: 17px; }
.script sub, .script sup { font-size: 10px; font-weight: 700; line-height: 10px; color: #2088d0; }
.script sub { align-self: flex-end; }
.script sup { align-self: flex-start; }
.color span { width: 20px; height: 20px; border-bottom: 5px solid #f00; font-size: 18px; line-height: 14px; }
.case { font-size: 17px; }
.grow { font-size: 21px; }
.shrink { font-size: 18px; }
.caret { width: 7px; height: 5px; margin-bottom: 12px; }
.pressed, .borders-button { border: 1px solid #666; border-radius: 5px; background: #ebebeb; }
.paragraph .group-body { padding: 0 9px 0 7px; }
.paragraph .row .sep { margin: 0 1px; }
.collapse { margin: auto 16px 2px auto; }

/* Borders menu */
.borders { position: relative; width: 60px; margin: 0 1px 0 2px; }
.borders-button { display: flex; align-items: center; width: 60px; height: 30px; gap: 16px; padding-left: 4px; }
.menu {
  position: absolute;
  z-index: 2;
  left: 0;
  top: 31px;
  width: 187px;
  padding: 0 1px 3px;
  border: 1px solid #c6c6c6;
  background: #fff;
  box-shadow: 1px 2px 4px #0002;
}
.item { position: relative; display: flex; align-items: center; gap: 9px; width: 100%; height: 34px; padding-left: 13px; }
.item .i20 { margin-right: 2px; }
.item.on { background: #ebebeb; }
.item.tall { height: 36px; }
.item.hover { background: #f4f4f4; }
.item u { text-underline-offset: 2px; }
.menu hr { height: 1px; margin: 1px 0; border: 0; background: #c8c8c8; }
.menu .inset { margin: 2px 0 1px 40px; }

/* Callouts */
.frame { position: absolute; z-index: 3; border: 3px solid #ee1c24; }
.frame-tab { inset: -1px -13px -7px -12px; }
.frame-borders { inset: -8px -8px -9px; }
.frame-item { inset: -9px -12px -12px; }
.badge {
  position: absolute;
  z-index: 3;
  width: 22px;
  height: 22px;
  border-radius: 50%;
  background: #e84548;
  box-shadow: 0 1px 3px #0008;
  color: #fff;
  font-size: 17px;
  line-height: 22px;
  text-align: center;
}
.badge-1 { left: 2px; top: 19px; }
.badge-2 { left: -30px; top: 40px; }
.badge-3 { left: -45px; top: 8px; }
.watermark { position: absolute; z-index: 4; left: 742px; top: 91px; width: 166px; color: #ee1c24; font-weight: 700; }
.brand { display: flex; justify-content: space-between; font-size: 22px; line-height: 28px; }
.site { margin-top: 5px; font-family: "Liberation Serif", serif; font-size: 18px; }

/* Document */
.workspace { display: flex; flex: 1; padding: 21px 35px 20px 25px; }
.page { flex: 1; min-width: 0; padding: 89px 148px 0; border: 1px solid #c6c6c6; border-bottom: 0; background: #fff; }
.crops { display: flex; justify-content: space-between; margin: 0 -29px; }
.crop { width: 30px; height: 30px; border-bottom: 1px solid #aaa; }
.crop.left { border-right: 1px solid #aaa; }
.crop.right { border-left: 1px solid #aaa; }
h1 { margin: 18px 0 22px; color: #000; font-size: 34px; font-style: italic; line-height: 40px; text-align: center; }
.line { display: flex; align-items: center; height: 24px; padding-left: 1px; }
.table-wrap { position: relative; display: flex; }
.seats { width: 100%; height: 231px; flex: none; border: 1px solid #000; border-spacing: 24px; table-layout: fixed; }
.seats td { padding: 0 0 0 11px; border: 1px solid #000; background: #c6c6c6; }
.seats td:first-child { background: linear-gradient(90deg, #fff 9px, #c6c6c6 9px); }
.seats svg { margin: 0 auto; }
.row-marks { display: flex; flex-direction: column; justify-content: space-around; width: 0; padding: 12px 0; }
.handle { position: absolute; left: -19px; top: -19px; width: 19px; height: 19px; }
.resize { position: absolute; left: 100%; top: 100%; width: 19px; height: 19px; border: 1px solid #999; background: #fff; }

/* Status bar */
.status { display: flex; align-items: center; flex: none; height: 28px; padding-left: 14px; border-top: 1px solid #fff; background: #f5f5f5; white-space: nowrap; }
.words { margin-left: 27px; }
.proof { margin: 0 20px 0 24px; }
.access, .focus { display: flex; align-items: center; gap: 1px; }
.access { margin-left: auto; }
.focus { margin: 0 14px 0 33px; }
.views { display: flex; align-self: stretch; }
.view { display: grid; place-items: center; width: 50px; }
.view.current { background: #e0e0e0; }
.zoom { display: flex; align-items: center; gap: 5px; margin-left: 6px; }
.zoom input { appearance: none; width: 125px; height: 14px; background: linear-gradient(#666, #666) center / 100% 1px no-repeat; }
.zoom input::-webkit-slider-thumb { appearance: none; width: 6px; height: 14px; background: #606060; }
.percent { margin: 0 24px 0 17px; }
```
